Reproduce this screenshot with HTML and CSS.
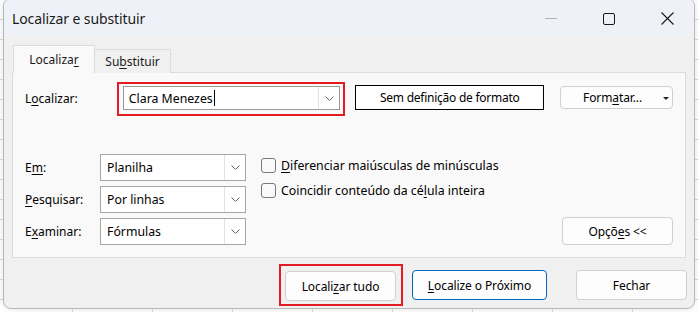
FILE: index.html
```html
<!DOCTYPE html>
<html lang="pt">
<head>
<meta charset="utf-8">
<title>Localizar e substituir</title>
<link rel="stylesheet" href="styles.css">
</head>
<body>
<div class="dialog">
  <div class="titlebar">
    <div class="title">Localizar e substituir</div>
    <div class="controls">
      <svg class="ctl" width="12" height="12" viewBox="0 0 12 12"><path d="M0 5.5H12" stroke="#b4b4b4" stroke-width="1"/></svg>
      <svg class="ctl" width="12" height="12" viewBox="0 0 12 12"><rect x="0.5" y="0.5" width="11" height="11" rx="1.5" fill="none" stroke="#1a1a1a" stroke-width="1"/></svg>
      <svg class="ctl" width="13" height="13" viewBox="0 0 13 13"><path d="M0.5 0.5L12.5 12.5M12.5 0.5L0.5 12.5" stroke="#1a1a1a" stroke-width="1.1"/></svg>
    </div>
  </div>
  <div class="content">
    <div class="tabs">
      <div class="tab active">Localiza<u>r</u></div>
      <div class="tab">Su<u>b</u>stituir</div>
    </div>
    <div class="panel">
      <div class="row-find">
        <div class="label lbl-find">L<u>o</u>calizar:</div>
        <div class="highlight hl-find">
          <div class="combo combo-find">
            <span class="combo-text">Clara Menezes<span class="caret"></span></span>
            <span class="combo-btn"><svg width="9" height="5" viewBox="0 0 9 5"><path d="M0.5 0.5L4.5 4.5L8.5 0.5" fill="none" stroke="#666" stroke-width="1"/></svg></span>
          </div>
        </div>
        <div class="btn-format-none">Sem definição de formato</div>
        <div class="btn btn-format">Form<u>a</u>tar...<svg class="tri" width="6" height="3" viewBox="0 0 6 3"><path d="M0 0H6L3 3Z" fill="#222"/></svg></div>
      </div>
      <div class="row-options">
        <div class="fields">
          <div class="field">
            <div class="label lbl-opt">E<u>m</u>:</div>
            <div class="combo combo-opt"><span class="combo-text">Planilha</span><span class="combo-btn"><svg width="9" height="5" viewBox="0 0 9 5"><path d="M0.5 0.5L4.5 4.5L8.5 0.5" fill="none" stroke="#666" stroke-width="1"/></svg></span></div>
          </div>
          <div class="field">
            <div class="label lbl-opt"><u>P</u>esquisar:</div>
            <div class="combo combo-opt"><span class="combo-text">Por linhas</span><span class="combo-btn"><svg width="9" height="5" viewBox="0 0 9 5"><path d="M0.5 0.5L4.5 4.5L8.5 0.5" fill="none" stroke="#666" stroke-width="1"/></svg></span></div>
          </div>
          <div class="field">
            <div class="label lbl-opt">E<u>x</u>aminar:</div>
            <div class="combo combo-opt"><span class="combo-text">Fórmulas</span><span class="combo-btn"><svg width="9" height="5" viewBox="0 0 9 5"><path d="M0.5 0.5L4.5 4.5L8.5 0.5" fill="none" stroke="#666" stroke-width="1"/></svg></span></div>
          </div>
        </div>
        <div class="checks">
          <div class="check"><span class="box"></span><span><u>D</u>iferenciar maiúsculas de minúsculas</span></div>
          <div class="check"><span class="box"></span><span>Coincidir conteúdo da cé<u>l</u>ula inteira</span></div>
        </div>
        <div class="btn btn-options">Opçõ<u>e</u>s &lt;&lt;</div>
      </div>
    </div>
    <div class="actions">
      <div class="highlight hl-all">
        <div class="btn btn-action">Locali<u>z</u>ar tudo</div>
      </div>
      <div class="btn btn-action btn-primary"><u>L</u>ocalize o Próximo</div>
      <div class="btn btn-action btn-close">Fechar</div>
    </div>
  </div>
</div>
</body>
</html>
```

FILE: styles.css
```css
* { box-sizing: border-box; }

html, body {
  margin: 0;
  padding: 0;
  width: 698px;
  height: 312px;
  overflow: hidden;
}

body {
  background-color: #ffffff;
  background-image:
    repeating-linear-gradient(90deg, transparent 0 72px, #d9d9d9 72px 73px, transparent 73px 80px),
    repeating-linear-gradient(180deg, transparent 0 19px, #d9d9d9 19px 20px);
  font-family: "Noto Sans", "Open Sans", sans-serif;
  font-size: 12px;
  color: #000;
}

u { text-decoration-thickness: 1px; text-underline-offset: 2px; }

.dialog {
  margin: -2px 0 0 3px;
  width: 692px;
  height: 311px;
  border: 1px solid #b9b9b9;
  border-radius: 8px;
  background: #f0f0f0;
  overflow: hidden;
  box-shadow: 0 0 6px rgba(0,0,0,0.12);
  display: flex;
  flex-direction: column;
}

.titlebar {
  height: 37px;
  flex: none;
  background: #eef2f8;
  display: flex;
  align-items: center;
  padding: 2px 0 0 8px;
}

.title {
  font-size: 14px;
  color: #1a1a1a;
  letter-spacing: -0.1px;
}

.controls {
  margin-left: auto;
  display: flex;
  align-items: center;
  gap: 46px;
  padding-right: 20px;
}

.ctl { display: block; }

.content {
  flex: 1;
  padding: 10px 8px 0 8px;
  display: flex;
  flex-direction: column;
}

.tabs {
  display: flex;
  align-items: flex-end;
  height: 27px;
  padding-left: 1px;
  margin-bottom: -1px;
  position: relative;
  z-index: 1;
}

.tab {
  height: 24px;
  padding: 0 12px;
  border: 1px solid #dcdcdc;
  border-bottom: none;
  background: #f0f0f0;
  display: flex;
  align-items: center;
  color: #1a1a1a;
  width: 77px;
  justify-content: center;
}

.tab.active {
  height: 28px;
  width: 82px;
  background: #f9f9f9;
  margin-right: -1px;
  position: relative;
  z-index: 2;
  padding-bottom: 1px;
}

.panel {
  height: 186px;
  background: #f9f9f9;
  border: 1px solid #dcdcdc;
  padding: 9px 12px 0 12px;
}

.row-find {
  display: flex;
  align-items: flex-start;
}

.label {
  color: #000;
  white-space: nowrap;
}

.lbl-find {
  width: 92px;
  line-height: 34px;
}

.highlight {
  border: 2px solid #e31b23;
}

.hl-find {
  width: 229px;
  height: 34px;
  padding: 2px 3px 0 4px;
}

.combo {
  display: flex;
  background: #fff;
  border: 1px solid #a6a6a6;
}

.combo-find {
  height: 24px;
  border-color: #999;
}

.combo-text {
  flex: 1;
  display: flex;
  align-items: center;
  padding-left: 5px;
  font-size: 12.3px;
  color: #000;
}

.caret {
  display: inline-block;
  width: 1px;
  height: 16px;
  background: #000;
  margin-left: 1px;
}

.combo-btn {
  width: 21px;
  border-left: 1px solid #e2e2e2;
  display: flex;
  align-items: center;
  justify-content: center;
  background: #fff;
}

.btn-format-none {
  margin: 3px 0 0 10px;
  width: 189px;
  height: 25px;
  border: 1px solid #000;
  background: #fff;
  display: flex;
  align-items: center;
  justify-content: center;
  font-size: 12px;
  letter-spacing: -0.25px;
}

.btn {
  background: #fdfdfd;
  border: 1px solid #d0d0d0;
  border-radius: 4px;
  display: flex;
  align-items: center;
  justify-content: center;
  color: #000;
  font-size: 12px;
  letter-spacing: -0.1px;
}

.btn-format {
  margin: 4px 0 0 16px;
  width: 113px;
  height: 23px;
  position: relative;
  padding-right: 8px;
}

.tri {
  position: absolute;
  right: 3px;
  top: 10px;
}

.row-options {
  display: flex;
  margin-top: 38px;
  align-items: flex-start;
}

.fields {
  display: flex;
  flex-direction: column;
  gap: 5px;
}

.field {
  display: flex;
  align-items: center;
  height: 27px;
}

.lbl-opt { width: 75px; }

.combo-opt {
  width: 146px;
  height: 27px;
}

.combo-opt .combo-text { padding-left: 6px; }

.checks {
  margin-left: 15px;
  padding-top: 3px;
  display: flex;
  flex-direction: column;
  gap: 9px;
}

.check {
  display: flex;
  align-items: center;
  height: 16px;
  gap: 5px;
  font-size: 12.3px;
  white-space: nowrap;
}

.box {
  width: 15px;
  height: 15px;
  border: 1px solid #777;
  border-radius: 3px;
  background: #f9f9f9;
}

.btn-options {
  margin: 63px 0 0 auto;
  width: 111px;
  height: 28px;
}

.actions {
  display: flex;
  align-items: center;
  justify-content: flex-end;
  margin-top: 6px;
  margin-right: -1px;
}

.hl-all {
  width: 124px;
  height: 42px;
  padding: 5px 4px 0 4px;
}

.btn-action {
  width: 111px;
  height: 30px;
}

.btn-primary {
  width: 135px;
  margin-left: 9px;
  border-color: #0067c0;
}

.btn-close {
  margin-left: 29px;
}
```
